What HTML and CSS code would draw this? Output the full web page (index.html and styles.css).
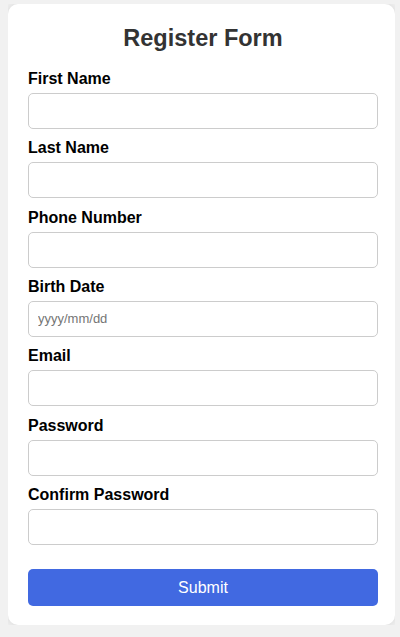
FILE: index.html
```html
<!DOCTYPE html>
<html lang="en">
<head>
<meta charset="utf-8">
<title>Register Form</title>
<link rel="stylesheet" href="styles.css">
</head>
<body>
  <form class="card">
    <h2 class="title">Register Form</h2>
    <div class="field">
      <label class="label" for="fn">First Name</label>
      <input class="input" id="fn" type="text">
    </div>
    <div class="field">
      <label class="label" for="ln">Last Name</label>
      <input class="input" id="ln" type="text">
    </div>
    <div class="field">
      <label class="label" for="ph">Phone Number</label>
      <input class="input" id="ph" type="text">
    </div>
    <div class="field">
      <label class="label" for="bd">Birth Date</label>
      <input class="input" id="bd" type="text" placeholder="yyyy/mm/dd">
    </div>
    <div class="field">
      <label class="label" for="em">Email</label>
      <input class="input" id="em" type="text">
    </div>
    <div class="field">
      <label class="label" for="pw">Password</label>
      <input class="input" id="pw" type="password">
    </div>
    <div class="field">
      <label class="label" for="cpw">Confirm Password</label>
      <input class="input" id="cpw" type="password">
    </div>
    <button class="submit" type="button">Submit</button>
  </form>
</body>
</html>
```

FILE: styles.css
```css
html, body {
  background: #f1f1f1;
}
body {
  margin: 4px 5px 0 8px;
  font-family: "Liberation Sans", Arial, sans-serif;
}
.card {
  box-sizing: border-box;
  background: #fff;
  border-radius: 10px;
  box-shadow: 0 0 8px rgba(0, 0, 0, 0.12);
  padding: 20px 17px 19px 20px;
  display: flex;
  flex-direction: column;
}
.title {
  margin: 0 0 18px;
  text-align: center;
  font-size: 23.5px;
  font-weight: bold;
  color: #333;
  line-height: 28px;
}
.field {
  display: flex;
  flex-direction: column;
  gap: 5px;
  margin-bottom: 10.33px;
}
.label {
  font-size: 16px;
  font-weight: bold;
  color: #000;
  line-height: 18px;
}
.input {
  box-sizing: border-box;
  width: 100%;
  height: 36px;
  border: 1px solid #ccc;
  border-radius: 5px;
  padding: 0 9px;
  font-family: "Liberation Sans", Arial, sans-serif;
  font-size: 13px;
  background: #fff;
  outline: none;
}
.input::placeholder {
  color: #757575;
}
.submit {
  margin-top: 14px;
  height: 37px;
  border: none;
  border-radius: 5px;
  background: #4169e1;
  color: #fff;
  font-family: "Liberation Sans", Arial, sans-serif;
  font-size: 16px;
  cursor: pointer;
}
```
